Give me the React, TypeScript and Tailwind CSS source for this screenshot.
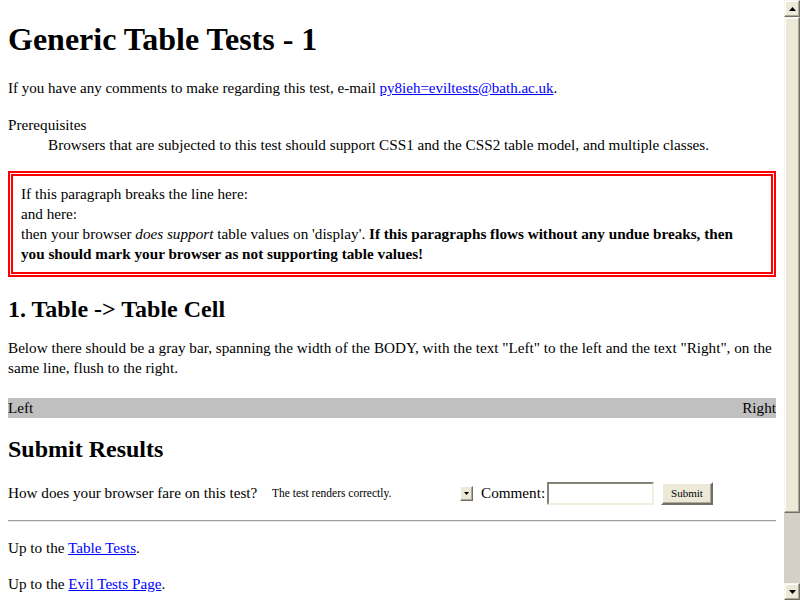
import React from "react";

const serif = { fontFamily: '"Liberation Serif", "Times New Roman", serif' };

function ScrollButton({ dir }: { dir: "up" | "down" }) {
  return (
    <div className="h-[17px] w-[16px] shrink-0 bg-[#ece9d8] border border-t-[#f5f4ee] border-l-[#f5f4ee] border-r-[#716f64] border-b-[#716f64] flex items-center justify-center shadow-[inset_-1px_-1px_0_#aca899,inset_1px_1px_0_#ffffff]">
      <svg width="7" height="4" viewBox="0 0 7 4">
        {dir === "up" ? (
          <polygon points="0,4 7,4 3.5,0" fill="#000" />
        ) : (
          <polygon points="0,0 7,0 3.5,4" fill="#000" />
        )}
      </svg>
    </div>
  );
}

export default function App() {
  return (
    <div className="w-[800px] h-[600px] flex bg-white overflow-hidden text-black" style={serif}>
      <div className="w-[784px] h-[600px] overflow-hidden px-[8px] text-[15.2px] leading-[20px]">
        <h1 className="mt-[21px] text-[32px] leading-[37px] font-bold">Generic Table Tests - 1</h1>
        <p className="mt-[20px] text-[15px]">
          If you have any comments to make regarding this test, e-mail{" "}
          <a className="text-[#0000ff] underline" href="#">py8ieh=eviltests@bath.ac.uk</a>.
        </p>
        <div className="mt-[17px]">Prerequisites</div>
        <div className="pl-[40px]">
          Browsers that are subjected to this test should support CSS1 and the CSS2 table model, and multiple classes.
        </div>
        <div className="mt-[16px] border-[5px] border-double border-[#ff0000] px-[8px] py-[8px]">
          <div>If this paragraph breaks the line here:</div>
          <div>and here:</div>
          <div className="whitespace-nowrap">
            then your browser <em>does support</em> table values on 'display'.{" "}
            <strong>
              If this paragraphs flows without any undue breaks, then
              <br />
              you should mark your browser as not supporting table values!
            </strong>
          </div>
        </div>
        <h2 className="mt-[18px] text-[24px] leading-[28px] font-bold">1. Table -&gt; Table Cell</h2>
        <p className="mt-[15px] whitespace-nowrap">
          Below there should be a gray bar, spanning the width of the BODY, with the text "Left" to the left and the text "Right", on the
          <br />
          same line, flush to the right.
        </p>
        <div className="mt-[20px] h-[20px] bg-[#c0c0c0] flex justify-between items-center">
          <span>Left</span>
          <span>Right</span>
        </div>
        <h2 className="mt-[17px] text-[24px] leading-[28px] font-bold">Submit Results</h2>
        <div className="mt-[18px] h-[24px] flex items-center">
          <span className="w-[254px] shrink-0 whitespace-nowrap">How does your browser fare on this test?</span>
          <div className="w-[214px] h-[19px] shrink-0 flex items-center">
            <span className="pl-[10px] text-[11.5px] leading-[14px] whitespace-nowrap">The test renders correctly.</span>
            <div className="ml-auto mr-[3px] w-[13px] h-[15px] bg-[#ece9d8] border border-t-[#ffffff] border-l-[#ffffff] border-r-[#716f64] border-b-[#716f64] flex items-center justify-center shadow-[inset_-1px_-1px_0_#aca899]">
              <svg width="5" height="3" viewBox="0 0 5 3">
                <polygon points="0,0 5,0 2.5,3" fill="#000" />
              </svg>
            </div>
          </div>
          <span className="ml-[5px] w-[64px] shrink-0 whitespace-nowrap">Comment:</span>
          <div className="ml-[2px] w-[107px] h-[23px] shrink-0 bg-white border-2 border-t-[#858375] border-l-[#858375] border-r-[#f1efe2] border-b-[#f1efe2]" />
          <div className="ml-[7px] w-[52px] h-[23px] shrink-0 bg-[#ece9d8] border-2 border-t-[#ffffff] border-l-[#ffffff] border-r-[#716f64] border-b-[#716f64] flex items-center justify-center text-[11px] leading-[14px] shadow-[inset_-1px_-1px_0_#aca899]">
            Submit
          </div>
        </div>
        <div className="mt-[15px] h-[2px] border-t border-t-[#a0a0a0] border-b border-b-[#e6e6e6]" />
        <p className="mt-[16px]">
          Up to the <a className="text-[#0000ff] underline" href="#">Table Tests</a>.
        </p>
        <p className="mt-[16px]">
          Up to the <a className="text-[#0000ff] underline" href="#">Evil Tests Page</a>.
        </p>
      </div>
      <div className="w-[16px] h-[600px] flex flex-col bg-[#d4d0c8]">
        <ScrollButton dir="up" />
        <div className="h-[496px] shrink-0 bg-[#ece9d8] border border-t-[#f5f4ee] border-l-[#f5f4ee] border-r-[#716f64] border-b-[#716f64] shadow-[inset_-1px_-1px_0_#aca899,inset_1px_1px_0_#ffffff]" />
        <div className="flex-1" />
        <ScrollButton dir="down" />
      </div>
    </div>
  );
}
